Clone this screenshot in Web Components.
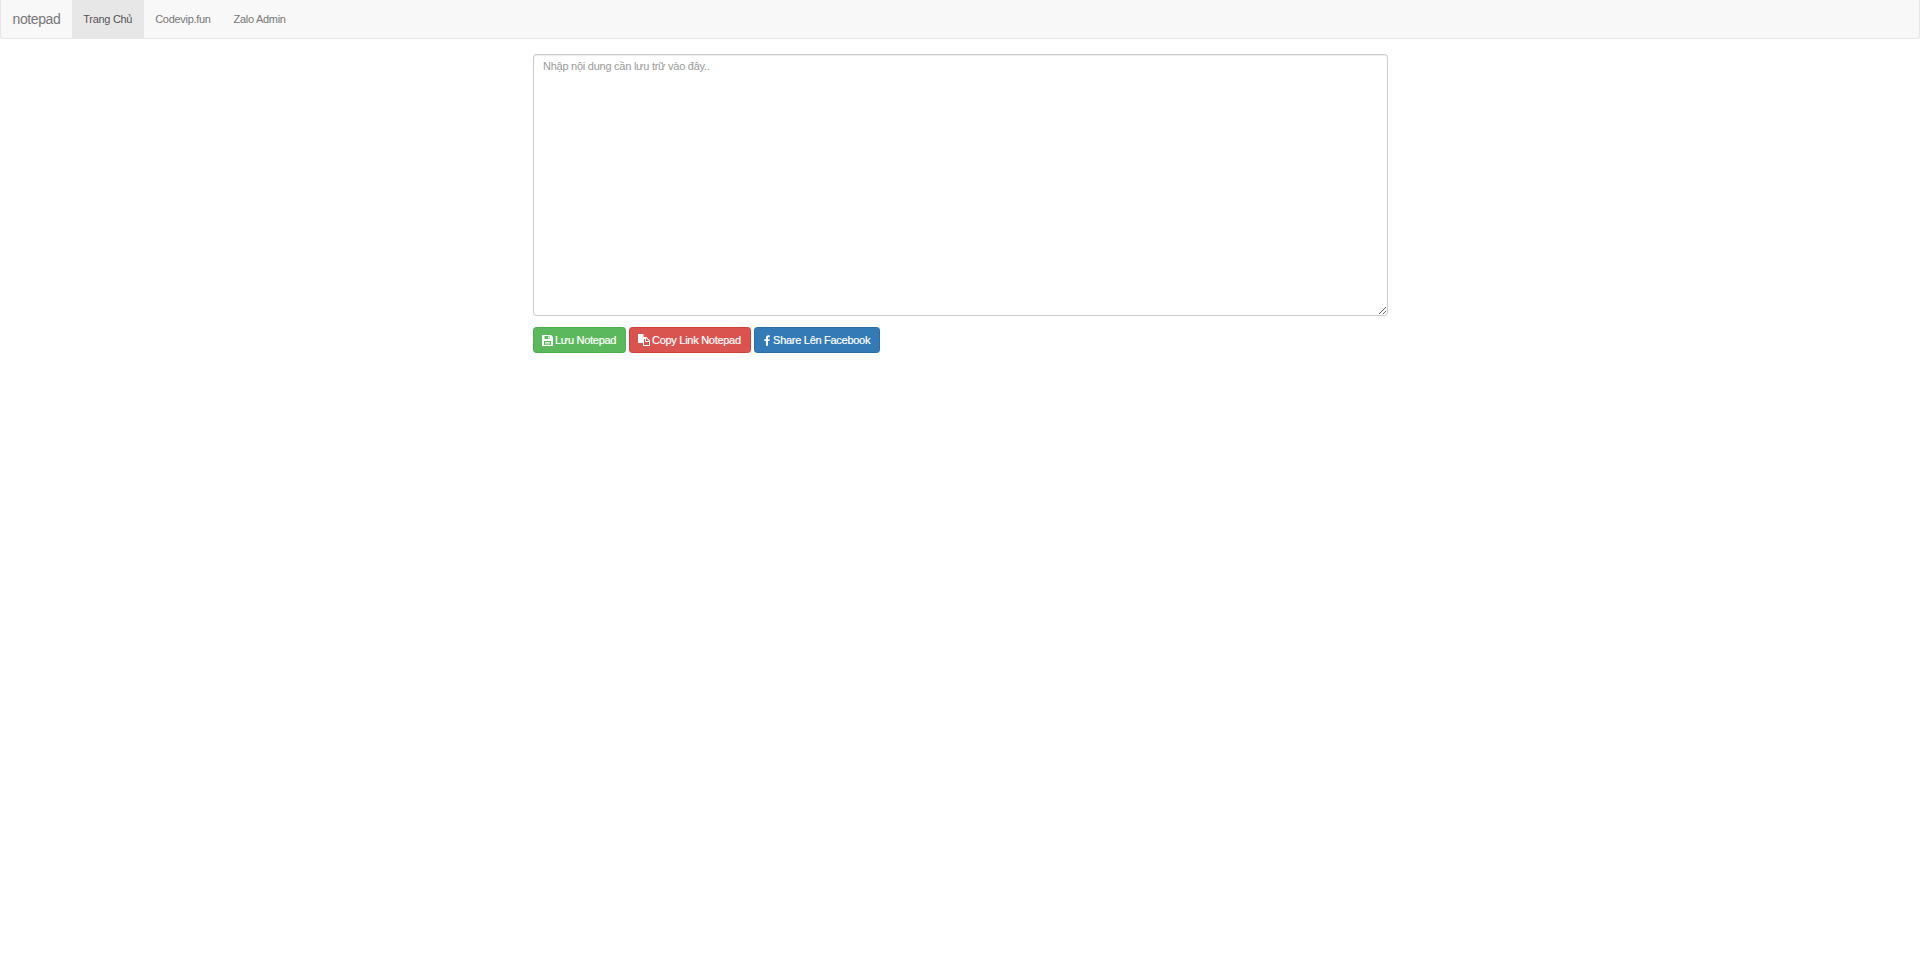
<!DOCTYPE html>
<html lang="vi">
<head>
<meta charset="utf-8">
<title>notepad</title>
<style>
html,body{margin:0;padding:0;background:#fff;}
body{font-family:"Liberation Sans",Arial,sans-serif;font-size:11px;color:#333;}
</style>
</head>
<body>
<np-navbar brand="notepad">
  <np-nav-link active>Trang Chủ</np-nav-link>
  <np-nav-link>Codevip.fun</np-nav-link>
  <np-nav-link>Zalo Admin</np-nav-link>
</np-navbar>
<np-editor placeholder="Nhập nội dung cần lưu trữ vào đây..">
  <np-button kind="success" icon="save">Lưu Notepad</np-button>
  <np-button kind="danger" icon="files">Copy Link Notepad</np-button>
  <np-button kind="primary" icon="facebook">Share Lên Facebook</np-button>
</np-editor>

<script>
class NpNavbar extends HTMLElement {
  constructor() {
    super();
    this.attachShadow({ mode: "open" });
    this.shadowRoot.innerHTML = `
      <style>
      :host{
        display:block;
      }
      .bar{
        display:flex;
        height:38px;
        background:#f8f8f8;
        border:1px solid #e7e7e7;
        border-top:none;
        border-radius:0 0 3.2px 3.2px;
      }
      .brand{
        display:flex;
        align-items:center;
        padding:0 11.5px 1px 11.5px;
        font-size:14px;
        letter-spacing:-.4px;
        color:#777;
      }
      </style>
      <div class="bar">
        <div class="brand" id="brand"></div>
        <slot></slot>
      </div>
    `;
  }
  connectedCallback() {
    this.shadowRoot.querySelector('#brand').textContent = this.getAttribute('brand');
  }
}
customElements.define('np-navbar', NpNavbar);

class NpNavLink extends HTMLElement {
  constructor() {
    super();
    this.attachShadow({ mode: "open" });
    this.shadowRoot.innerHTML = `
      <style>
      :host{
        display:flex;
        align-items:center;
        padding:0 11.5px 1px;
        font-size:11px;
        letter-spacing:-.3px;
        color:#777;
      }
      :host([active]){
        background:#e7e7e7;
        color:#555;
      }
      </style>
      <slot></slot>
    `;
  }
}
customElements.define('np-nav-link', NpNavLink);

const NP_ICONS = {
  save: '<svg viewBox="0 0 11 11" width="11" height="11"><path fill="currentColor" fill-rule="evenodd" d="M0 0h9l2 2v9H0zM2.500 1v3h5V1zM6 1.500h1v2H6zM2 6v4h7V6z"/><path fill="currentColor" d="M3 7h5v.8H3zM3 8.500h5v.8H3z"/></svg>',
  files: '<svg viewBox="0 0 12 12" width="12" height="12"><path fill="currentColor" d="M0 0h5.500v3H5v6H0z"/><path fill="currentColor" fill-rule="evenodd" d="M5 3h3.500L12 6.500V12H5zM8 4v3h3zM6 5v6h5V8H7V5z"/></svg>',
  facebook: '<svg viewBox="0 0 8 14" width="6" height="11" style="margin:0 1px 0 1.500px"><path fill="currentColor" d="M5.200 14V7.700h2.100l.3-2.500H5.200V3.700c0-.7.2-1.200 1.200-1.200h1.300V.2C7.500.1 6.700 0 5.800 0 3.900 0 2.600 1.200 2.600 3.300v1.900H.4v2.500h2.200V14z"/></svg>'
};

class NpButton extends HTMLElement {
  constructor() {
    super();
    this.attachShadow({ mode: "open" });
    this.shadowRoot.innerHTML = `
      <style>
      :host{
        display:inline-flex;
        align-items:center;
        gap:2px;
        height:26px;
        box-sizing:border-box;
        padding:0 8.8px 0 8px;
        font-size:11px;
        letter-spacing:-.28px;
        -webkit-text-stroke:.2px #fff;
        color:#fff;
        border:1px solid;
        border-radius:3.2px;
        white-space:nowrap;
        cursor:pointer;
      }
      :host([kind=success]){ background:#5cb85c; border-color:#4cae4c; }
      :host([kind=danger]){ background:#d9534f; border-color:#d43f3a; }
      :host([kind=primary]){ background:#337ab7; border-color:#2e6da4; }
      #icon{
        display:flex;
      }
      </style>
      <span id="icon"></span><slot></slot>
    `;
  }
  connectedCallback() {
    this.shadowRoot.querySelector('#icon').innerHTML = NP_ICONS[this.getAttribute('icon')] || '';
  }
}
customElements.define('np-button', NpButton);

class NpEditor extends HTMLElement {
  constructor() {
    super();
    this.attachShadow({ mode: "open" });
    this.shadowRoot.innerHTML = `
      <style>
      :host{
        display:block;
        width:855px;
        margin:15px auto 0 533px;
      }
      textarea{
        display:block;
        width:100%;
        height:262px;
        box-sizing:border-box;
        padding:3px 9px;
        font:11px/16px "Liberation Sans",Arial,sans-serif;
        letter-spacing:-.25px;
        color:#555;
        background:#fff;
        border:1px solid #ccc;
        border-radius:3.2px;
        box-shadow:inset 0 1px 1px rgba(0,0,0,.075);
        outline:none;
      }
      textarea::placeholder{
        color:#999;
        opacity:1;
      }
      .actions{
        display:flex;
        gap:3px;
        margin-top:11px;
      }
      </style>
      <textarea id="text"></textarea>
      <div class="actions"><slot></slot></div>
    `;
  }
  connectedCallback() {
    this.shadowRoot.querySelector('#text').placeholder = this.getAttribute('placeholder');
  }
}
customElements.define('np-editor', NpEditor);
</script>
</body>
</html>
